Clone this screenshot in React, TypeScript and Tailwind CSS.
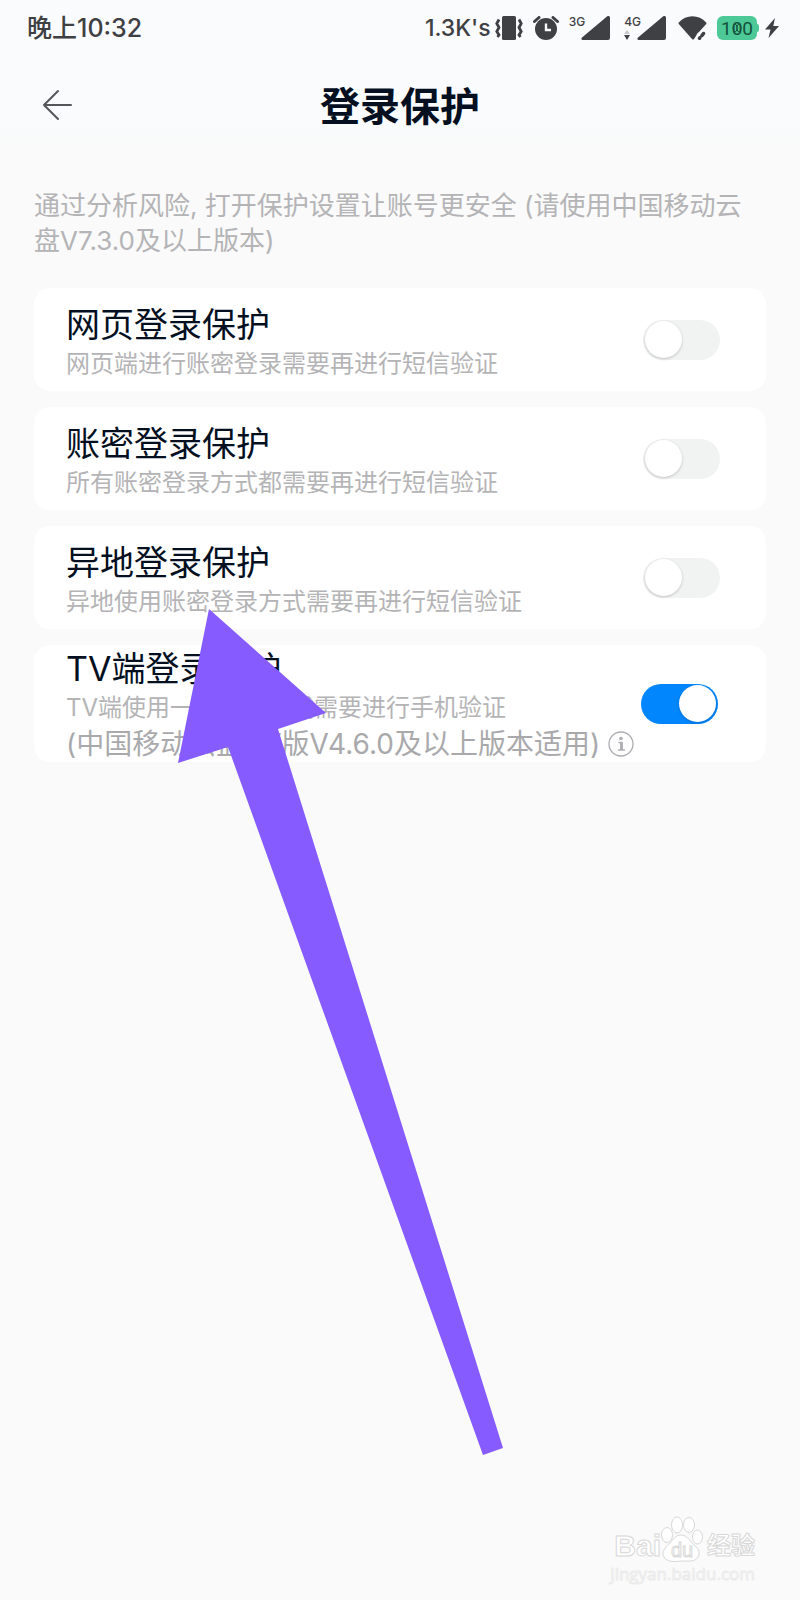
import { useState } from "react";

type Option = {
  id: string;
  title: string;
  desc: string;
  note?: string;
};

const OPTIONS: Option[] = [
  {
    id: "web",
    title: "网页登录保护",
    desc: "网页端进行账密登录需要再进行短信验证",
  },
  {
    id: "password",
    title: "账密登录保护",
    desc: "所有账密登录方式都需要再进行短信验证",
  },
  {
    id: "remote",
    title: "异地登录保护",
    desc: "异地使用账密登录方式需要再进行短信验证",
  },
  {
    id: "tv",
    title: "TV端登录保护",
    desc: "TV端使用一键登录方式需要进行手机验证",
    note: "(中国移动云盘TV版V4.6.0及以上版本适用)",
  },
];

function VibrateIcon() {
  return (
    <svg width="28" height="24" viewBox="0 0 28 24" fill="none">
      <rect x="7" y="0" width="14" height="24" rx="1.500" fill="currentColor" />
      <path
        d="M4 3.500 1.800 7.500 4 11.500 1.800 15.500 4 19 2.500 21M24 3.500l2.200 4-2.200 4 2.200 4-2.200 3.500 1.500 2"
        stroke="currentColor"
        strokeWidth="2.800"
      />
    </svg>
  );
}

function AlarmIcon() {
  return (
    <svg width="26" height="24" viewBox="0 0 26 24" fill="none">
      <circle cx="13" cy="13" r="11" fill="currentColor" />
      <path
        d="M1.500 5.500 6 1.500M24.500 5.500 20 1.500"
        stroke="currentColor"
        strokeWidth="3"
        strokeLinecap="round"
      />
      <path d="M13 7.500V14h5" stroke="#f9fbfd" strokeWidth="2.400" />
    </svg>
  );
}

function SignalIcon() {
  return (
    <svg width="29" height="24" viewBox="0 0 29 24" fill="currentColor">
      <path d="M26 .6 1 21.500C0 22.500.3 24 2 24h25a2 2 0 0 0 2-2V2C29 .2 27.300-.4 26 .6Z" />
    </svg>
  );
}

function WifiIcon() {
  return (
    <svg width="29" height="24" viewBox="0 0 29 24" fill="none">
      <path
        d="M.8 6.500C8-2 21-2 28.200 6.500c.4.6.3 1.100-.2 1.700L21 16c-1.500 1-2.500 2.500-3 4l-2 3c-.6.700-1.400.700-2 0L1 8.200C.4 7.600.4 7 .8 6.500Z"
        fill="currentColor"
      />
      <path
        d="m21.500 22.300.3-.5M24 19.500l1.500-2"
        stroke="currentColor"
        strokeWidth="3.500"
        strokeLinecap="round"
      />
    </svg>
  );
}

function StatusBar() {
  return (
    <div className="flex h-14 items-center justify-between pr-[21px] pl-[27px] text-[25px] leading-none font-medium text-[#3f4043]">
      <span>晚上10:32</span>
      <div className="flex items-center">
        <span className="text-[23px]">1.3K's</span>
        <span className="ml-1">
          <VibrateIcon />
        </span>
        <span className="ml-2.5">
          <AlarmIcon />
        </span>
        <div className="ml-2.5 flex h-6">
          <span className="text-[12px] leading-[12px]">3G</span>
          <span className="-ml-1">
            <SignalIcon />
          </span>
        </div>
        <div className="ml-3.5 flex h-6">
          <div className="flex flex-col justify-between">
            <span className="text-[12px] leading-[12px]">4G</span>
            <svg width="6" height="10" viewBox="0 0 6 10">
              <path d="M3 0 6 4H0Z" fill="#c4c6c8" />
              <path d="M3 10 6 5H0Z" fill="#3f4043" />
            </svg>
          </div>
          <span className="-ml-1">
            <SignalIcon />
          </span>
        </div>
        <span className="ml-3">
          <WifiIcon />
        </span>
        <div className="ml-2.5 flex items-center">
          <div className="relative flex h-6 w-10 items-center justify-center rounded-md bg-[#4cc997] font-['Roboto'] text-[19px] font-normal text-[#14523c]">
            100
            <svg
              className="absolute"
              width="12"
              height="10"
              viewBox="0 0 12 10"
              fill="none"
              stroke="#14523c"
            >
              <ellipse cx="4" cy="5" rx="2" ry="4" />
              <ellipse cx="8" cy="5" rx="2" ry="4" />
            </svg>
          </div>
          <span className="h-2 w-0.5 rounded-r bg-[#4cc997]" />
        </div>
        <svg
          className="ml-1.5"
          width="14"
          height="20"
          viewBox="0 0 14 20"
          fill="currentColor"
        >
          <path d="M10 0 0 11.500h5.500L3.500 20 14 8H8.300Z" />
        </svg>
      </div>
    </div>
  );
}

function OptionCard({
  option,
  checked,
  onChange,
}: {
  option: Option;
  checked: boolean;
  onChange: (value: boolean) => void;
}) {
  return (
    <li
      className={`flex items-center justify-between rounded-2xl bg-white pl-8 ${
        option.note ? "pr-12" : "pr-[46px]"
      }`}
    >
      <div
        className={`whitespace-nowrap text-[#b4b4b6] ${
          option.note ? "pt-[3px]" : "pt-4 pb-[9px]"
        }`}
      >
        <label
          htmlFor={option.id}
          className="block text-[34px] leading-[42px] text-[#04101f]"
        >
          {option.title}
        </label>
        <p className="text-[24px] leading-[36px]">{option.desc}</p>
        {option.note && (
          <div className="flex items-center text-[28px] leading-[36px] text-[#a9a9ac]">
            <span>{option.note}</span>
            <button type="button" aria-label="说明" className="ml-2">
              <svg
                width="26"
                height="26"
                viewBox="0 0 26 26"
                fill="none"
                stroke="#adadb3"
              >
                <circle cx="13" cy="13" r="12" strokeWidth="1.300" />
                <circle cx="13" cy="7.500" r="1.800" fill="#adadb3" stroke="none" />
                <path d="M10.500 11.500h3v7" strokeWidth="1.500" />
                <path d="M13.500 11v8" strokeWidth="2.800" />
                <path d="M10 19h7" strokeWidth="1.500" />
              </svg>
            </button>
          </div>
        )}
      </div>
      <input
        id={option.id}
        type="checkbox"
        role="switch"
        checked={checked}
        onChange={(e) => onChange(e.target.checked)}
        className="flex h-10 w-[77px] shrink-0 appearance-none items-center rounded-full bg-[#f1f3f3] px-0.5 before:size-[37px] before:rounded-full before:bg-white before:shadow-[0_1px_3px_rgba(0,0,0,0.2)] checked:justify-end checked:bg-[#0286fd]"
      />
    </li>
  );
}

function Watermark() {
  return (
    <footer className="mt-auto mr-[45px] mb-[15px] self-end text-white">
      <div className="flex h-12 items-end justify-end [-webkit-text-stroke:1px_#d8d8d8]">
        <span className="font-['Liberation_Sans'] text-[30px] leading-[34px] font-bold">
          Bai
        </span>
        <div className="relative flex h-12 w-[42px] items-end justify-center">
          <svg
            className="absolute inset-0"
            width="42"
            height="48"
            viewBox="0 0 42 48"
            fill="white"
            stroke="#d8d8d8"
          >
            <ellipse cx="6" cy="20" rx="5.500" ry="7.500" />
            <ellipse cx="16" cy="10" rx="5.500" ry="8" />
            <ellipse cx="28" cy="10" rx="5.500" ry="7.500" />
            <ellipse cx="36.500" cy="22" rx="5" ry="7" />
            <path d="M20 20c6 0 8 5 12 9 5 4 8 8 5 13-3 5-9 4-17 4-7 1-14 1-17-4-3-5 1-9 5-13 4-4 6-9 12-9Z" />
          </svg>
          <span className="relative font-['Liberation_Sans'] text-[20px] leading-[26px]">
            du
          </span>
        </div>
        <span className="ml-1 text-[24px] leading-[34px] font-bold">经验</span>
      </div>
      <p className="font-['Open_Sans'] text-[17px] leading-[22px] [-webkit-text-stroke:1px_#ebebeb]">
        jingyan.baidu.com
      </p>
    </footer>
  );
}

export default function App() {
  const [enabled, setEnabled] = useState<Record<string, boolean>>({ tv: true });

  return (
    <div className="relative flex min-h-screen flex-col bg-[#fafafa] font-['Inter','Noto_Sans_CJK_SC',sans-serif]">
      <div className="bg-linear-to-b from-[#f9fbfd] from-70% to-[#fafafa]">
        <StatusBar />
        <header className="grid h-[98px] grid-cols-[1fr_auto_1fr] items-center pl-[42px]">
          <button type="button" aria-label="返回" className="justify-self-start">
            <svg
              width="31"
              height="32"
              viewBox="0 0 31 32"
              fill="none"
              stroke="#55565a"
              strokeWidth="2"
              strokeLinecap="round"
              strokeLinejoin="round"
            >
              <path d="M16 2 2 16l14 14M2 16h27" />
            </svg>
          </button>
          <h1 className="pt-1 pr-[42px] text-[40px] font-bold text-[#04101f]">
            登录保护
          </h1>
        </header>
      </div>
      <main className="px-[34px] pt-[34px]">
        <p className="text-[26px] leading-[35px] text-[#b4b4b6]">
          通过分析风险, 打开保护设置让账号更安全 (请使用中国移动云盘V7.3.0及以上版本)
        </p>
        <ul className="mt-[30px] flex flex-col gap-4">
          {OPTIONS.map((option) => (
            <OptionCard
              key={option.id}
              option={option}
              checked={!!enabled[option.id]}
              onChange={(value) =>
                setEnabled((prev) => ({ ...prev, [option.id]: value }))
              }
            />
          ))}
        </ul>
      </main>
      <Watermark />

      {/* pointer drawn over the list */}
      <svg
        className="pointer-events-none absolute top-[609px] left-[178px]"
        width="326"
        height="847"
        viewBox="0 0 326 847"
      >
        <path
          d="M31 0 148 104 100 120 325 839 305 846 50 138 0 154Z"
          fill="#865bff"
        />
      </svg>
    </div>
  );
}
